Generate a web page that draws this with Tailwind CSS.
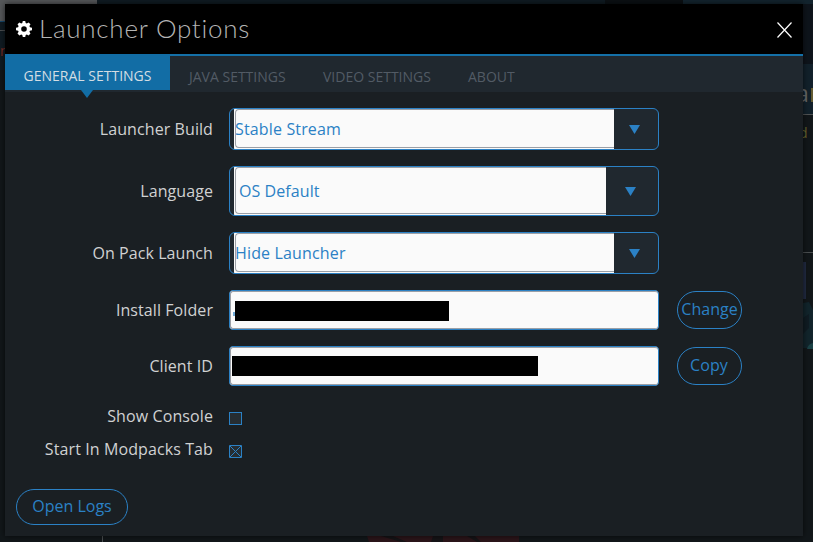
<!DOCTYPE html>
<html lang="en">
<head>
<meta charset="utf-8">
<title>Launcher Options</title>
<script src="https://cdn.jsdelivr.net/npm/@tailwindcss/browser@4"></script>
</head>
<body class="relative w-[813px] h-[542px] overflow-hidden bg-[#12171a] font-['Open_Sans','Noto_Sans',sans-serif] text-base">
<!-- Dimmed launcher window behind the dialog -->
<svg class="absolute inset-0" width="813" height="542" aria-hidden="true">
  <rect width="813" height="70" fill="#101b22"/>
  <rect width="97" height="21" fill="#56585a"/>
  <rect y="21" width="5" height="1" fill="#14476b"/>
  <rect y="30" width="5" height="1" fill="#4b4e50"/>
  <text x="0" y="56" font-size="14" fill="#7a2a22">n</text>
  <rect x="605" width="78" height="4" fill="#0b1013"/>
  <rect x="683" width="130" height="4" fill="#13242e"/>
  <rect x="803" y="4" width="10" height="60" fill="#0e141b"/>
  <rect x="803" y="64" width="10" height="50" fill="#12212b"/>
  <text x="796" y="102" font-size="23" fill="#65686a">a</text>
  <rect x="811" y="88" width="2" height="14" fill="#635b32"/>
  <rect x="803" y="114" width="10" height="1" fill="#505354"/>
  <text x="799" y="138" font-size="14" fill="#68652f">d</text>
  <rect x="803" y="252" width="10" height="1" fill="#4a4e50"/>
  <rect x="803" y="262" width="3" height="37" fill="#222b43"/>
  <path d="M803 303l6-1 4 8v38h-10z" fill="#12252c"/>
  <path d="M803 318l6-4v14l-6 6z" fill="#101c23"/>
  <path d="M807 349q1-5 6-6v6z" fill="#1b4246"/>
  <rect x="102" y="536" width="1" height="6" fill="#4b4f51"/>
  <path d="M367 536h152v6H369z" fill="#2c151a"/>
  <path d="M381 536h12l14 6h-6zM433 536h10v6h-12zM467 536h8l6 6h-4z" fill="#161417"/>
</svg>

<main class="absolute left-[5px] top-1 w-[798px] h-[532px] flex flex-col bg-[#1a1f23] shadow-[0_0_6px_0_rgba(0,0,0,0.65)]">
  <header class="h-[50px] shrink-0 flex items-center bg-black pl-[11px] pr-[10px]">
    <svg width="16" height="16" viewBox="0 0 16 16" fill="#fff">
      <path fill-rule="evenodd" d="M6.8 0h2.4l.5 2 1.1.5 1.8-1.1 1.9 1.9-1.1 1.8.5 1.1 2.1.6v2.4l-2.1.5-.5 1.1 1.1 1.8-1.9 1.9-1.8-1.1-1.1.5-.5 2.1H6.8l-.5-2.1-1.1-.5-1.8 1.1-1.9-1.9 1.1-1.8-.5-1.1L0 9.200V6.800l2.100-.6.5-1.100-1.100-1.800 1.900-1.900L5.200 2.500 6.300 2zM8 5.200a2.800 2.800 0 1 0 0 5.600 2.800 2.800 0 0 0 0-5.600z"/>
    </svg>
    <h1 class="ml-[7px] -mt-0.5 font-[Lato,sans-serif] font-light text-[26px] leading-[32px] tracking-[0.75px] text-[#b4b4b4] whitespace-nowrap">Launcher Options</h1>
    <svg class="ml-auto mt-px" width="17" height="18" viewBox="0 0 17 18" fill="none" stroke="#fff" stroke-width="1.200"><path d="M1.500 1.500l14 15M15.500 1.500l-14 15"/></svg>
  </header>

  <nav class="h-[38px] shrink-0 flex border-t-2 border-[#1470a8] bg-[#20282f] text-sm leading-[20px] text-[#525b65] whitespace-nowrap">
    <div class="relative -mt-0.5 h-9 w-[165px] pt-3 text-center bg-[#126da5] text-[#d3dde3]">GENERAL SETTINGS
      <svg class="absolute left-[76px] top-9" width="12" height="8" fill="#126da5"><path d="M0 0h12L6 8z"/></svg>
    </div>
    <div class="pt-[11px] ml-[19px] w-[134px]">JAVA SETTINGS</div>
    <div class="pt-[11px] w-[145px]">VIDEO SETTINGS</div>
    <div class="pt-[11px]">ABOUT</div>
  </nav>

  <section class="pt-4 flex flex-col gap-4 tracking-[0.08px] text-[#2b81c5]">
    <div class="flex items-center gap-4 h-[42px]">
      <div class="w-52 text-right text-[#d0d1d2]">Launcher Build</div>
      <div class="w-[430px] h-full flex border border-[#2b81c5] rounded-md bg-[#20282f] pl-1 overflow-hidden">
        <div class="w-[380px] flex bg-[#fafafa] pl-px pb-px"><div class="flex-1 flex items-center border border-r-0 border-[#9b9fa6] rounded-l-sm"><span class="-ml-px tracking-[0.15px]">Stable Stream</span></div></div>
        <svg class="ml-[15px] mt-4" width="11" height="9" fill="#2b81c5"><path d="M0 0h11L5.500 9z"/></svg>
      </div>
    </div>
    <div class="flex items-center gap-4 h-[50px]">
      <div class="w-52 text-right text-[#d0d1d2]">Language</div>
      <div class="w-[430px] h-full flex border border-[#2b81c5] rounded-md bg-[#20282f] pl-1 overflow-hidden">
        <div class="w-[372px] flex bg-[#fafafa] pl-px pb-px"><div class="flex-1 flex items-center border border-r-0 border-[#9b9fa6] rounded-l-sm pl-[3px]">OS Default</div></div>
        <svg class="ml-[19px] mt-5" width="11" height="9" fill="#2b81c5"><path d="M0 0h11L5.500 9z"/></svg>
      </div>
    </div>
    <div class="flex items-center gap-4 h-[42px]">
      <div class="w-52 text-right text-[#d0d1d2]">On Pack Launch</div>
      <div class="w-[430px] h-full flex border border-[#2b81c5] rounded-md bg-[#20282f] pl-1 overflow-hidden">
        <div class="w-[380px] flex bg-[#fafafa] pl-px pb-px"><div class="flex-1 flex items-center border border-r-0 border-[#9b9fa6] rounded-l-sm"><span class="-ml-px tracking-[0.15px]">Hide Launcher</span></div></div>
        <svg class="ml-[15px] mt-4" width="11" height="9" fill="#2b81c5"><path d="M0 0h11L5.500 9z"/></svg>
      </div>
    </div>
    <div class="flex items-center h-10">
      <div class="w-52 mr-4 text-right text-[#d0d1d2]">Install Folder</div>
      <div class="w-[430px] h-full border border-[#2b81c5] rounded-[4px] bg-[#fafafa]">
        <div class="h-full border border-r-0 border-[#9b9fa6] rounded-[3px] flex items-start pl-0.5 pt-[9px]">
          <div class="w-0.5 h-5 flex items-center"><div class="w-0.5 h-1 mt-1.5 bg-[#6fa9d6]"></div></div>
          <div class="w-[214px] h-5 bg-black"></div>
        </div>
      </div>
      <button class="ml-[18px] w-[65px] h-[38px] rounded-full border border-[#2b81c5] pb-0.5 tracking-normal">Change</button>
    </div>
    <div class="flex items-center h-10">
      <div class="w-52 mr-4 text-right text-[#d0d1d2]">Client ID</div>
      <div class="w-[430px] h-full border border-[#2b81c5] rounded-[4px] bg-[#fafafa]">
        <div class="h-full border border-r-0 border-[#9b9fa6] rounded-[3px] pl-px pt-2">
          <div class="w-[306px] h-5 bg-black"></div>
        </div>
      </div>
      <button class="ml-[18px] w-[65px] h-[38px] rounded-full border border-[#2b81c5] pb-0.5 pr-px">Copy</button>
    </div>
  </section>

  <section class="mt-[14px] tracking-[0.1px] text-[#d0d1d2]">
    <div class="flex items-center gap-4 h-[33px]">
      <div class="w-52 pb-0.5 text-right">Show Console</div>
      <div class="mt-1 size-[13px] border border-[#2b81c5] bg-[#262d32]"></div>
    </div>
    <div class="flex items-center gap-4 h-[33px]">
      <div class="w-52 pb-0.5 text-right">Start In Modpacks Tab</div>
      <svg class="mt-1" width="13" height="13" fill="#262d32" stroke="#2b81c5"><path d="M.5.5h12v12H.5z"/><path d="M1 1l11 11M12 1L1 12"/></svg>
    </div>
  </section>
  <button class="mt-[23px] ml-[11px] w-28 h-9 rounded-full border border-[#2b81c5] text-[#2b81c5] pb-0.5">Open Logs</button>
</main>
</body>
</html>
